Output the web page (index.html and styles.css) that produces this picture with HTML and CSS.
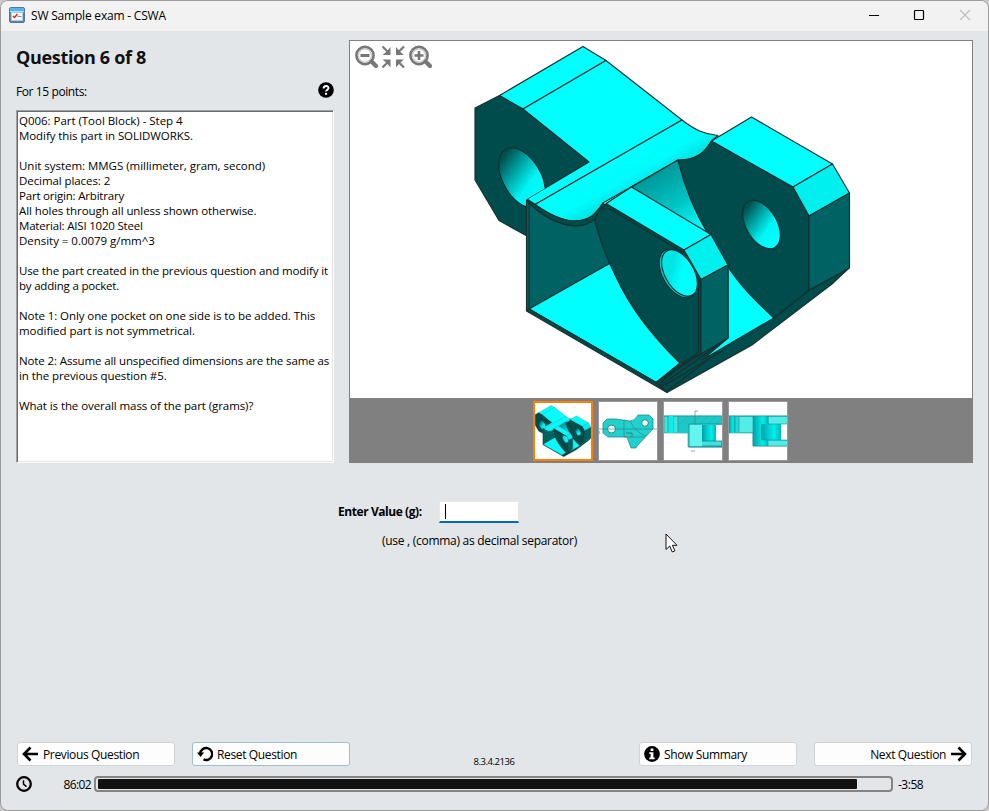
FILE: index.html
```html
<!DOCTYPE html>
<html lang="en">
<head>
<meta charset="utf-8">
<title>SW Sample exam - CSWA</title>
<link rel="stylesheet" href="styles.css">
</head>
<body>
<div class="window">
  <header class="titlebar">
    <svg class="app-icon" width="16" height="16" viewBox="0 0 16 16"><rect x=".5" y=".5" width="15" height="15" rx="1.5" fill="#5d87a5" stroke="#51799a"/><rect x="1" y="1" width="14" height="3" fill="#55b5ee"/><rect x="1" y="4" width="14" height="1" fill="#b9ddf0"/><rect x="2.5" y="5.5" width="11" height="8" fill="#f4f6f8" stroke="#b4cbd9"/><path d="M4 9l1.500 1.500L8.500 7" fill="none" stroke="#d3272f" stroke-width="1.500"/><path d="M8.500 9.500h4" stroke="#899"/></svg>
    <span class="title">SW Sample exam - CSWA</span>
    <svg class="controls" width="103" height="12" viewBox="0 0 103 12" fill="none"><path d="M0 6.500h10" stroke="#000"/><rect x="45.500" y="1.500" width="9" height="9" rx=".8" stroke="#000" stroke-width="1.200"/><path d="M91 1l10 10M101 1L91 11" stroke="#bdbdbd" stroke-width="1.100"/></svg>
  </header>
  <main class="content">
    <section class="question">
      <h1>Question 6 of 8</h1>
      <div class="points"><span>For 15 points:</span>
        <svg width="16" height="16" viewBox="0 0 16 16"><circle cx="8" cy="8" r="7.800"/><path d="M5.600 6.500C5.600 3.200 10.500 3.300 10.500 6c0 1.800-2.400 1.800-2.400 3.600" fill="none" stroke="#fff" stroke-width="1.900"/><rect x="7" y="10.800" width="2.100" height="2" fill="#fff"/></svg>
      </div>
      <div class="statement">
        <div class="paragraph">
          <div class="loose">Q006: Part (Tool Block) - Step 4</div>
          <div>Modify this part in SOLIDWORKS.</div>
        </div>
        <div class="paragraph">
          <div class="loose">Unit system: MMGS (millimeter, gram, second)</div>
          <div>Decimal places: 2</div>
          <div class="tighter">Part origin: Arbitrary</div>
          <div>All holes through all unless shown otherwise.</div>
          <div class="tighter">Material: AISI 1020 Steel</div>
          <div class="loose">Density = 0.0079 g/mm^3</div>
        </div>
        <div class="paragraph">
          <div class="tight">Use the part created in the previous question and modify it</div>
          <div class="tighter">by adding a pocket.</div>
        </div>
        <div class="paragraph">
          <div>Note 1: Only one pocket on one side is to be added. This</div>
          <div class="loose">modified part is not symmetrical.</div>
        </div>
        <div class="paragraph">
          <div class="tight">Note 2: Assume all unspecified dimensions are the same as</div>
          <div>in the previous question #5.</div>
        </div>
        <div class="paragraph">
          <div>What is the overall mass of the part (grams)?</div>
        </div>
      </div>
    </section>
    <section class="viewer">
      <div class="stage">
        <svg width="622" height="357" viewBox="350 41 622 357">
          <defs>
            <linearGradient id="bore" x1=".35" y1="0" x2=".6" y2="1"><stop offset=".08" stop-color="#005050"/><stop offset=".38" stop-color="#00a9a9"/><stop offset=".65" stop-color="#00f5f5"/><stop offset="1" stop-color="#0ff"/></linearGradient>
            <linearGradient id="thin" x1="0" y1="0" x2=".6" y2="1"><stop stop-color="#00f0f0"/><stop offset=".4" stop-color="#00e4e4"/><stop offset=".65" stop-color="#0ff"/></linearGradient>
            <linearGradient id="fillet" gradientUnits="userSpaceOnUse" x1="611" y1="162" x2="631" y2="197"><stop stop-color="#0ff"/><stop offset=".55" stop-color="#00fcfc"/><stop offset="1" stop-color="#00dada"/></linearGradient>
            <linearGradient id="pocket" gradientUnits="userSpaceOnUse" x1="658" y1="165" x2="694" y2="228"><stop stop-color="#009292"/><stop offset=".6" stop-color="#00c4c4"/><stop offset="1" stop-color="#00f8f8"/></linearGradient>
            <clipPath id="behind"><path d="M470 90H600V155.500L527 199V245H470Z"/></clipPath>
          </defs>
          <g id="part" stroke="#17302f" stroke-width="1.150" stroke-linejoin="round">
            <path fill="#004c4c" d="M475 108L499.500 95.500L523 109L589 162L527 199V236L499 220.500L475 180Z"/>
            <path fill="#0ff" d="M499.500 95.500L583 46.500L606 60.500L523 109Z"/>
            <path fill="#0ff" d="M523 109L606 60.500L682 120L535 204.500L527 199L589 162Z"/>
            <g clip-path="url(#behind)"><ellipse cx="522" cy="178" rx="19" ry="33" transform="rotate(-30 522 178)" fill="url(#bore)"/></g>
            <path fill="#006262" d="M526.500 200C544 216 555 223 575 226C591 226 599 215 605 207L595 221C601 240 604 249 610.500 263L529 309L526.500 310Z"/>
            <path fill="#0ff" d="M529 309L610.500 263C623 298 649 333 680 363L656 382.500Z"/>
            <path fill="#004c4c" d="M526.500 310L529 309L656 382.500L698 351L728 338L774 318L809 290L849 268L832 284L752 345L667 392.500L526.500 311Z"/>
            <path fill="#0ff" d="M728 265L774 318L760 326L702 360L728 338Z"/>
            <path fill="url(#fillet)" d="M682 120C695 130 704 134 718 135.500L711.500 141C703 155 695 160 678 160L603 203C594 217 587 221 574 221C561 221 547 213 535 204.500Z"/>
            <path fill="#004c4c" d="M527 200L535 204.500C547 213 561 221 574 221C587 221 594 217 603 203L606 206C596 220 588 226 575 226C560 225 542 217 527 201Z"/>
            <path fill="url(#pocket)" d="M631.500 187L678 160C684 184 692 207 708 234Z"/>
            <path fill="#004c4c" d="M678 160C695 160 703 155 711.500 141L793 187L809 216V290L774 318C754 300 737 282 727 265L708 233C693 209 684 184 678 160Z"/>
            <path fill="#0ff" d="M711.500 141L751.500 117L832.500 164L793 187Z"/>
            <path fill="#00f0f0" d="M793 187L832.500 164L849.500 193L809 216Z"/>
            <path fill="#006262" d="M809 216L849.500 193V268L809 290Z"/>
            <ellipse cx="761.500" cy="224.500" rx="15.400" ry="26.600" transform="rotate(-30 761.500 224.500)" fill="url(#bore)"/>
            <path fill="#004c4c" d="M599 210L606 204L684 250L701 279.500V354L680 363C641 325 608 274 595 221Z"/>
            <path fill="#0ff" d="M606 203.500L631.500 187L711 234.500L684 250Z"/>
            <path fill="#00efef" d="M684 250L711 234.500L728 265L701 279.500Z"/>
            <path fill="#006262" d="M701 279.500L728 265V338L701 354Z"/>
            <path fill="none" d="M599 209L610 209L682 252L698.500 280V352L660 383M529 202V309L657 383L667 392.500M701 354L656 382.500M660 386L728 338M660 388L722 351M667 391L717 353"/>
            <ellipse cx="678" cy="273.500" rx="15.400" ry="26.600" transform="rotate(-30 678 273.500)" fill="#00c8c8"/>
            <ellipse cx="679.500" cy="273" rx="14.500" ry="25.500" transform="rotate(-30 679.500 273)" fill="url(#thin)"/>
          </g>
        </svg>
        <svg class="zoom-tools" width="80" height="26" viewBox="0 0 80 26" fill="none" stroke="#777">
          <g><circle cx="11" cy="11.500" r="8.600" stroke-width="2.600"/><circle cx="11" cy="11.500" r="6.500" stroke="#c9c9c9" stroke-width="1.200"/><path d="M17.500 17.500L22 22" stroke-width="4.200" stroke-linecap="round"/><path d="M6.500 11.500h9" stroke-width="2.800"/></g>
          <g transform="translate(54)"><circle cx="11" cy="11.500" r="8.600" stroke-width="2.600"/><circle cx="11" cy="11.500" r="6.500" stroke="#c9c9c9" stroke-width="1.200"/><path d="M17.500 17.500L22 22" stroke-width="4.200" stroke-linecap="round"/><path d="M6.500 11.500h9M11 7v9" stroke-width="2.600"/></g>
          <path d="M28.500 2.500l6 6M50 2.500l-6 6M28.500 23.500l6-6M50 23.500l-6-6" stroke-width="2.200"/>
          <path d="M36.500 3v8h-8l3-2.500 2.500-2.500zM42 3v8h8l-3-2.500-2.500-2.500zM36.500 15.500v8l-2.500-3-2.500-2.500-3-2.500zM42 15.500v8l2.500-3 2.500-2.500 3-2.500z" fill="#777" stroke="none"/>
        </svg>
      </div>
      <div class="thumbs">
        <div class="thumb selected"><svg width="56" height="56" viewBox="474 44 376 350"><use href="#part"/></svg></div>
        <div class="thumb"><svg width="58" height="58" viewBox="0 0 58 58"><path d="M8 17h9l14 2q5 0 8-6h11l4 4v10L38 44l-1 2h-5l-4-11H9l-5-4V21z" fill="#1fd2ce" stroke="#187f80" stroke-width=".7"/><circle cx="12.500" cy="27" r="4" fill="#fff" stroke="#2a8585"/><circle cx="46" cy="21" r="3.300" fill="#fff" stroke="#2a8585"/><path d="M0 27h58M25 18v17h21M31 19q6 12 16 15" fill="none" stroke="#3a7777" stroke-width=".6"/><path d="M27 31h6v4M0 29v3" stroke="#466" fill="none" stroke-width=".8"/></svg></div>
        <div class="thumb"><svg width="58" height="58" viewBox="0 0 58 58"><path d="M0 14h58v31H24V31H0z" fill="#3ee2de" stroke="#398f91" stroke-width=".6"/><path d="M14 14h44v8H25v9H14z" fill="#1dc9c8"/><path d="M16 22l8-8m-4 8l8-8m0 8l8-8m0 8l8-8m0 8l8-8m0 8l6-6" stroke="#22afaf" stroke-width=".5" fill="none"/><path d="M0 14h58M4 14v16M9 14v16M14 14v16" stroke="#188f96" fill="none" stroke-width=".7"/><path d="M5 14h4v17H5z" fill="#00f1ee"/><path d="M25 23h13v21H25z" fill="#65f5f0"/><path d="M38 23h14v16H38z" fill="url(#drum)"/><path d="M52 23h6v16h-6z" fill="#fff"/><path d="M38 39h20v5H38M25 22v23h33M25 22h33" fill="none" stroke="#168589" stroke-width=".8"/><path d="M31 22V9h3M27 49h4" stroke="#666" stroke-width=".6" fill="none"/></svg></div>
        <div class="thumb"><svg width="58" height="58" viewBox="0 0 58 58"><defs><linearGradient id="drum"><stop stop-color="#00a2aa"/><stop offset=".65" stop-color="#00efe9"/><stop offset="1" stop-color="#00bac0"/></linearGradient></defs><path d="M0 14h58v30H24V31H0z" fill="#24d8d6" stroke="#3a9699" stroke-width=".6"/><path d="M0 14h6v17H0z" fill="url(#drum)"/><path d="M10 15h14v15H10zM40 15h18v7H40zM39 39h19v5H39z" fill="#54ece7"/><path d="M24 14h15v30H24z" fill="url(#drum)"/><path d="M32 22h20v16H32z" fill="url(#drum)"/><path d="M52 22h6v16h-6z" fill="#fff"/><path d="M0 14h58M6 14v16M10 14v16M24 14v30M39 14v8h19M39 39v5M24 44h34M33 38h25" fill="none" stroke="#238b91" stroke-width=".6"/></svg></div>
      </div>
    </section>
  </main>
  <section class="answer">
    <div class="answer-row"><label>Enter Value (g):</label><div class="field"><i class="caret"></i></div></div>
    <p class="hint">(use , (comma) as decimal separator)</p>
    <svg class="pointer" width="13" height="20" viewBox="0 0 13 20"><path d="M1 1v15.500l3.700-3.500 2.600 6 2.600-1.200-2.500-5.500H12z" fill="#fff" stroke="#111" stroke-linejoin="round"/></svg>
  </section>
  <footer>
    <nav class="actions">
      <button class="prev"><svg width="17" height="16" viewBox="0 0 17 16"><path d="M8.500 1.500L2 8l6.500 6.500M2 8h14" fill="none" stroke="#000" stroke-width="2.600"/></svg><span>Previous Question</span></button>
      <button class="reset"><svg width="16" height="16" viewBox="0 0 16 16"><path d="M3.200 7.500A6 6 0 1 1 6.500 13.400" fill="none" stroke="#000" stroke-width="2.400"/><path d="M0 6.500h7.200L3.500 11z"/></svg><span>Reset Question</span></button>
      <span class="version">8.3.4.2136</span>
      <button class="summary"><svg width="16" height="16" viewBox="0 0 16 16"><circle cx="8" cy="8" r="7.900"/><path d="M6.600 2.500h2.800v2.400H6.600zM5.300 6.200h4.100v5.200h1.300v1.800H5.300v-1.800h1.300V8H5.300z" fill="#fff"/></svg><span>Show Summary</span></button>
      <button class="next"><span>Next Question</span><svg width="17" height="16" viewBox="0 0 17 16"><path d="M8.500 1.500L15 8l-6.500 6.500M15 8H1" fill="none" stroke="#000" stroke-width="2.600"/></svg></button>
    </nav>
    <div class="timer">
      <svg width="16" height="16" viewBox="0 0 16 16" fill="none" stroke="#000"><circle cx="8" cy="8" r="6.800" stroke-width="2.300"/><path d="M7.500 4.200v4l3 2.500" stroke-width="1.500"/></svg>
      <span class="elapsed">86:02</span><div class="track"><div class="bar"></div></div><span class="remaining">-3:58</span>
    </div>
  </footer>
</div>
</body>
</html>
```
FILE: styles.css
```css
* { box-sizing: border-box; }
body { margin: 0; width: 989px; height: 811px; overflow: hidden; background: #c9c9c9; color: #000; font: 12px/15px "Open Sans", sans-serif; letter-spacing: -.32px; }
svg { display: block; flex: none; }
.window { width: 989px; height: 811px; border: 1px solid #9b9b9d; border-radius: 8px; background: #e2e6e9; overflow: hidden; display: flex; flex-direction: column; }
.titlebar { height: 30px; background: #f2f2f2; display: flex; align-items: center; padding: 0 16px 2px 8px; }
.title { margin-left: 6px; letter-spacing: -.2px; padding-top: 1px; }
.controls { margin-left: auto; }
.content { display: flex; margin: 9px 15px 0; height: 423px; }
.question { width: 318px; }
h1 { margin: 5px 0 0; font-size: 18px; line-height: 24px; font-weight: 700; letter-spacing: -.32px; color: #111; }
.points { display: flex; justify-content: space-between; align-items: center; height: 16px; margin-top: 13px; }
.points span { padding-top: 2px; letter-spacing: -.4px; }
.statement { margin-top: 12px; height: 353px; background: #fff; border: 1px solid #fff; border-top-color: #a0a0a0; border-left-color: #a0a0a0; box-shadow: inset 1px 1px #696969, inset -1px -1px #e3e3e3; padding: 2px 2px 0; white-space: nowrap; font-size: 11.5px; letter-spacing: -.08px; }
.paragraph { margin-bottom: 15px; }
.loose { letter-spacing: -.03px; }
.tight { letter-spacing: -.12px; }
.tighter { letter-spacing: -.2px; }
.viewer { margin-left: 15px; width: 624px; height: 423px; border: 1px solid #808080; background: #808080; }
.stage { height: 357px; background: #fff; position: relative; }
.zoom-tools { position: absolute; left: 4px; top: 3px; }
.thumbs { height: 64px; display: flex; justify-content: center; gap: 5px; padding-top: 3px; margin-left: -1px; }
.thumb { width: 60px; height: 60px; background: #fff; border: 1px solid #999; }
.thumb.selected { border: 2px solid #ff8000; }
.answer { position: relative; height: 110px; padding-top: 37px; }
.answer-row { display: flex; height: 23px; align-items: center; padding-left: 337px; }
.answer label { width: 101px; font-weight: 700; letter-spacing: -.43px; }
.field { width: 80px; height: 22px; background: #fff; border: 1px solid #e8e8e8; border-bottom: 2px solid #0067c0; padding: 2px 5px; }
.caret { display: block; width: 1px; height: 15px; background: #000; }
.hint { margin: 10px 0 0 381px; letter-spacing: -.28px; }
.pointer { position: absolute; left: 664px; top: 70px; }
footer { margin-top: auto; height: 68px; padding: 0 16px; }
.actions { display: flex; height: 25px; }
button { width: 158px; height: 24px; padding: 0 4px; border: 1px solid #d0d2d4; border-radius: 3px; background: #fdfdfd; color: #000; font: inherit; letter-spacing: -.36px; display: flex; align-items: center; gap: 4px; }
button span { padding-top: 1px; }
.reset { margin-left: 17px; border-color: #9fbdd5; }
.version { width: 88px; margin: 12px 100px 0; text-align: center; font-size: 9.5px; font-weight: 500; letter-spacing: -.45px; }
.summary { margin-left: 1px; }
.next { margin-left: 17px; justify-content: flex-end; }
.timer { display: flex; align-items: center; height: 16px; margin-top: 9px; margin-left: -1px; }
.elapsed { width: 51px; text-align: right; margin-left: 8px; letter-spacing: -.6px; }
.track { width: 799px; height: 16px; margin-left: 3px; border: 2px solid #858384; border-radius: 4px; padding: 1px; }
.bar { width: 759px; height: 10px; margin-left: 1px; border-radius: 1px; background: #111; }
.remaining { margin-left: 5px; letter-spacing: -.5px; }
```
